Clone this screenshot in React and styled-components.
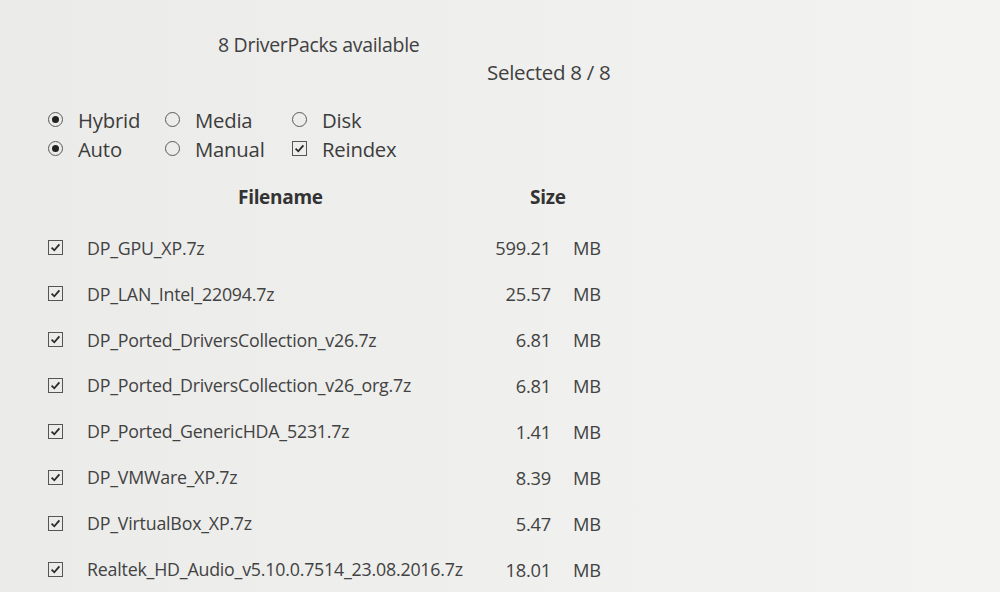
import React from "react";
import styled, { createGlobalStyle } from "styled-components";

const Global = createGlobalStyle`
  html, body { margin: 0; padding: 0; }
  body {
    background: linear-gradient(90deg, #ebebe9 0%, #efefed 50%, #f3f3f1 100%);
    font-family: "Open Sans", "Noto Sans", sans-serif;
    color: #404040;
  }
`;

const Page = styled.div`
  width: 1000px;
  height: 592px;
  overflow: hidden;
  box-sizing: border-box;
  padding: 32px 0 0 48px;
  display: flex;
  flex-direction: column;
`;

const Title = styled.div`
  margin-left: 170px;
  font-size: 19.5px;
  line-height: 26px;
  letter-spacing: -0.3px;
`;

const Selected = styled.div`
  margin-left: 439px;
  margin-top: 1px;
  font-size: 20.5px;
  line-height: 26px;
  letter-spacing: -0.3px;
`;

const Options = styled.div`
  margin-top: 20px;
  display: grid;
  grid-template-columns: 117px 127px 160px;
  grid-auto-rows: 29px;
`;

const Option = styled.label`
  display: flex;
  align-items: center;
  gap: 15px;
  font-size: 20.3px;
  color: #3c3c3c;
  letter-spacing: -0.2px;
`;

const RadioMark = styled.span`
  width: 15px;
  height: 15px;
  border: 1px solid #5a5a5a;
  border-radius: 50%;
  box-sizing: border-box;
  display: flex;
  align-items: center;
  justify-content: center;
  flex: none;
  &::after {
    content: "";
    width: 7px;
    height: 7px;
    border-radius: 50%;
    background: ${(p) => (p.$on ? "#222" : "transparent")};
  }
`;

const BoxMark = styled.span`
  width: 15px;
  height: 15px;
  border: 1px solid #555;
  box-sizing: border-box;
  display: flex;
  align-items: center;
  justify-content: center;
  flex: none;
  svg { display: block; }
`;

const Check = () => (
  <BoxMark>
    <svg width="11" height="11" viewBox="0 0 11 11">
      <path d="M1.6 5.6 L4.3 8.3 L9.4 2.4" fill="none" stroke="#2a2a2a" strokeWidth="1.8" />
    </svg>
  </BoxMark>
);

const Header = styled.div`
  margin-top: 11px;
  height: 46px;
  display: flex;
  align-items: center;
`;

const HeaderCell = styled.div`
  box-sizing: border-box;
  font-weight: 700;
  font-size: 19px;
  color: #333;
  width: ${(p) => p.$w}px;
  padding-left: ${(p) => p.$pl || 0}px;
  letter-spacing: -0.3px;
`;

const Table = styled.div`
  margin-top: 5px;
  display: grid;
  grid-template-columns: 39px 380px 84px 22px 60px;
  grid-auto-rows: 45.9px;
  align-items: center;
`;

const Cell = styled.div`
  font-size: 17.8px;
  color: #424242;
  white-space: nowrap;
  letter-spacing: -0.2px;
  text-align: ${(p) => (p.$right ? "right" : "left")};
`;

const NumCell = styled(Cell)`
  font-size: 18.3px;
`;

const BoxCell = styled.div`
  display: flex;
  align-items: center;
`;

const rows = [
  ["DP_GPU_XP.7z", "599.21"],
  ["DP_LAN_Intel_22094.7z", "25.57"],
  ["DP_Ported_DriversCollection_v26.7z", "6.81"],
  ["DP_Ported_DriversCollection_v26_org.7z", "6.81"],
  ["DP_Ported_GenericHDA_5231.7z", "1.41"],
  ["DP_VMWare_XP.7z", "8.39"],
  ["DP_VirtualBox_XP.7z", "5.47"],
  ["Realtek_HD_Audio_v5.10.0.7514_23.08.2016.7z", "18.01"],
];

export default function App() {
  return (
    <>
      <Global />
      <Page>
        <Title>8 DriverPacks available</Title>
        <Selected>Selected 8 / 8</Selected>
        <Options>
          <Option><RadioMark $on />Hybrid</Option>
          <Option><RadioMark />Media</Option>
          <Option><RadioMark />Disk</Option>
          <Option><RadioMark $on />Auto</Option>
          <Option><RadioMark />Manual</Option>
          <Option><Check />Reindex</Option>
        </Options>
        <Header>
          <HeaderCell $w={482} $pl={190}>Filename</HeaderCell>
          <HeaderCell $w={80}>Size</HeaderCell>
        </Header>
        <Table>
          {rows.map(([name, size]) => (
            <React.Fragment key={name}>
              <BoxCell><Check /></BoxCell>
              <Cell>{name}</Cell>
              <NumCell $right>{size}</NumCell>
              <span />
              <NumCell>MB</NumCell>
            </React.Fragment>
          ))}
        </Table>
      </Page>
    </>
  );
}
